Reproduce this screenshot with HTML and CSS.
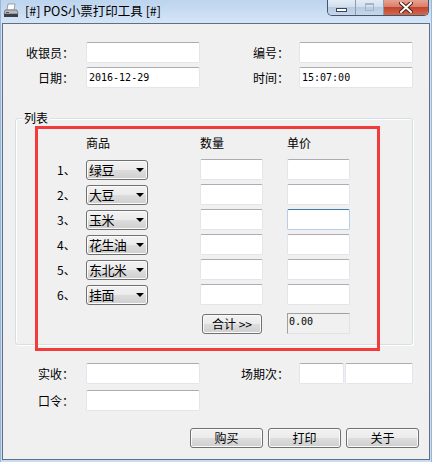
FILE: index.html
```html
<!DOCTYPE html>
<html>
<head>
  <meta charset="utf-8">
  <title>POS小票打印工具</title>
  <link rel="stylesheet" href="styles.css">
</head>
<body>
  <div class="window">
    <div class="titlebar">
      <svg class="app-icon" width="16" height="16" viewBox="0 0 16 16">
        <path d="M5 1 L12 1 L11 7 L4 7 Z" fill="#fff" stroke="#8a8a8a" stroke-width="0.8"/>
        <path d="M2 7 L14 7 L15 11 L1 11 Z" fill="#b8bcc2" stroke="#6d7278" stroke-width="0.8"/>
        <rect x="1" y="11" width="14" height="3" fill="#3c4046"/>
        <rect x="3" y="9" width="3" height="1" fill="#555"/>
      </svg>
      <span class="title">[#] POS小票打印工具 [#]</span>
      <div class="caption-buttons">
        <span class="cap-btn cap-min"><i></i></span>
        <span class="cap-btn cap-max"><i></i></span>
        <span class="cap-btn cap-close">
          <svg width="14" height="11" viewBox="0 0 14 11">
            <path d="M2 1 L12 10 M12 1 L2 10" stroke="#4b2018" stroke-width="4" stroke-linecap="square"/>
            <path d="M2 1 L12 10 M12 1 L2 10" stroke="#fff" stroke-width="2" stroke-linecap="square"/>
          </svg>
        </span>
      </div>
    </div>

    <div class="client">
      <div class="form-grid top-fields">
        <label>收银员：</label><input class="text">
        <label>编号：</label><input class="text">
        <label>日期：</label><input class="text" value="2016-12-29">
        <label>时间：</label><input class="text" value="15:07:00">
      </div>

      <div class="group">
        <div class="group-title">列表</div>
        <div class="item-grid">
          <span></span>
          <span class="col-head">商品</span>
          <span class="col-head">数量</span>
          <span class="col-head">单价</span>

          <span class="row-no">1、</span>
          <div class="combo"><span>绿豆</span><i class="arrow"></i></div>
          <input class="text">
          <input class="text">

          <span class="row-no">2、</span>
          <div class="combo"><span>大豆</span><i class="arrow"></i></div>
          <input class="text">
          <input class="text">

          <span class="row-no">3、</span>
          <div class="combo"><span>玉米</span><i class="arrow"></i></div>
          <input class="text">
          <input class="text focused">

          <span class="row-no">4、</span>
          <div class="combo"><span>花生油</span><i class="arrow"></i></div>
          <input class="text">
          <input class="text">

          <span class="row-no">5、</span>
          <div class="combo"><span>东北米</span><i class="arrow"></i></div>
          <input class="text">
          <input class="text">

          <span class="row-no">6、</span>
          <div class="combo"><span>挂面</span><i class="arrow"></i></div>
          <input class="text">
          <input class="text">

          <span></span>
          <span></span>
          <button class="btn total-btn">合计 &gt;&gt;</button>
          <div class="total-box">0.00</div>
        </div>
      </div>

      <div class="form-grid bottom-fields">
        <label>实收：</label><input class="text">
        <label>场期次：</label>
        <div class="split">
          <input class="text short">
          <input class="text long">
        </div>
        <label>口令：</label><input class="text">
      </div>

      <div class="actions">
        <button class="btn">购买</button>
        <button class="btn">打印</button>
        <button class="btn">关于</button>
      </div>

      <!-- red annotation frame drawn over the list -->
      <div class="highlight"></div>
    </div>
  </div>
</body>
</html>
```

FILE: styles.css
```css
html, body {
  margin: 0;
  padding: 0;
}

body {
  font-family: "Noto Sans CJK SC", "Noto Sans", sans-serif;
  font-size: 12px;
  color: #000;
  background-color: #c9dcf1;
}

.window {
  width: 432px;
  height: 462px;
  box-sizing: border-box;
  background: linear-gradient(to bottom, #bcd4ee 0, #d4e4f6 22px, #c8dcf2 100%);
  box-shadow: inset 1px 0 0 #9bb7d8, inset -1px 0 0 #9bb7d8;
}

.titlebar {
  height: 23px;
  display: flex;
  align-items: flex-start;
  padding-left: 3px;
}

.app-icon {
  margin-top: 3px;
  flex: none;
}

.title {
  margin-left: 6px;
  line-height: 22px;
  font-size: 12.5px;
  white-space: nowrap;
}

.caption-buttons {
  margin-left: auto;
  margin-right: 3px;
  display: flex;
  height: 16px;
  border: 1px solid #44546c;
  border-top: none;
  border-radius: 0 0 5px 5px;
  overflow: hidden;
  box-sizing: border-box;
}

.cap-btn {
  display: flex;
  align-items: center;
  justify-content: center;
  height: 100%;
}

.cap-min, .cap-max {
  width: 27px;
  background: linear-gradient(to bottom, #e3ecf6 0, #d2dfee 45%, #b9cbe1 50%, #c6d6ea 100%);
  border-right: 1px solid #8a9bb2;
}

.cap-min {
  border-bottom-left-radius: 4px;
}

.cap-min i {
  display: block;
  width: 9px;
  height: 2px;
  margin-top: 5px;
  background: #fff;
  border: 1px solid #38465c;
}

.cap-max i {
  display: block;
  width: 7px;
  height: 5px;
  margin-top: -2px;
  border: 1px solid #a6b4c6;
  border-top-width: 2px;
}

.cap-close {
  width: 44px;
  background: linear-gradient(to bottom, #e7a291 0, #d9806a 45%, #c4452f 50%, #cf6a4c 100%);
}

.client {
  position: relative;
  margin: 0 2px;
  height: 437px;
  box-sizing: border-box;
  border: 1px solid #5f6f84;
  background-color: #f0f0f0;
}

.form-grid {
  display: grid;
  grid-template-columns: 83px 114px 99px 114px;
  grid-auto-rows: 21px;
  align-items: center;
}

.form-grid label {
  text-align: right;
  padding-right: 12px;
}

.form-grid label:nth-of-type(2n) {
  padding-right: 10px;
}

.top-fields {
  padding-top: 18px;
  row-gap: 4px;
}

.bottom-fields {
  margin-top: 18px;
  row-gap: 6px;
}

.text {
  display: block;
  width: 100%;
  height: 21px;
  box-sizing: border-box;
  margin: 0;
  padding: 0 2px;
  border: 1px solid #e2e6ec;
  border-top-color: #abadb3;
  border-radius: 2px;
  background: #fff;
  font-family: "DejaVu Sans Mono", "Liberation Mono", monospace;
  font-size: 10px;
  color: #000;
  outline: none;
}

.text.focused {
  border-color: #b5cfe7;
  border-top-color: #3d7bad;
}

.split {
  display: flex;
  gap: 1px;
}

.split .short {
  width: 45px;
}

.split .long {
  width: 68px;
}

.group {
  margin: 30px 16px 0 12px;
  border: 1px solid #d5dfe5;
  border-radius: 3px;
  box-shadow: inset 1px 1px 0 #fff, 1px 1px 0 #fff;
}

.group-title {
  width: max-content;
  height: 14px;
  line-height: 14px;
  margin: -8px 0 0 6px;
  padding: 0 2px;
  background-color: #f0f0f0;
}

.item-grid {
  display: grid;
  grid-template-columns: 70px 114px 87px 63px;
  grid-template-rows: 21px repeat(6, 21px) 25px;
  row-gap: 4px;
  padding: 9px 0 10px 0;
  align-items: center;
}

.item-grid .text {
  width: 63px;
}

.col-head {
  align-self: start;
  line-height: 18px;
}

.row-no {
  padding-left: 41px;
  line-height: 14px;
}

.combo {
  width: 62px;
  height: 20px;
  box-sizing: border-box;
  display: flex;
  align-items: center;
  justify-content: space-between;
  padding: 0 3px 0 2px;
  border: 1px solid #707070;
  border-radius: 3px;
  background: linear-gradient(to bottom, #f2f2f2 0, #ebebeb 50%, #dddddd 50%, #cfcfcf 100%);
  box-shadow: inset 0 0 0 1px #fbfbfb;
  font-size: 13px;
  letter-spacing: -0.6px;
  line-height: 18px;
}

.arrow {
  width: 0;
  height: 0;
  margin-top: 1px;
  border-left: 4px solid transparent;
  border-right: 4px solid transparent;
  border-top: 4px solid #000;
}

.btn {
  height: 20px;
  box-sizing: border-box;
  margin: 0;
  padding: 0;
  border: 1px solid #707070;
  border-radius: 3px;
  background: linear-gradient(to bottom, #f2f2f2 0, #ebebeb 50%, #dddddd 50%, #cfcfcf 100%);
  box-shadow: inset 0 0 0 1px #fbfbfb;
  font-family: "Noto Sans CJK SC", sans-serif;
  font-size: 12px;
  line-height: 18px;
  color: #000;
}

.total-btn {
  width: 60px;
  margin-left: 2px;
  align-self: end;
}

.total-box {
  width: 63px;
  height: 21px;
  box-sizing: border-box;
  align-self: end;
  border: 1px solid #e3e3e3;
  border-top-color: #a0a0a0;
  border-left-color: #a0a0a0;
  padding: 2px 0 0 1px;
  font-family: "DejaVu Sans Mono", "Liberation Mono", monospace;
  font-size: 10px;
  line-height: 12px;
}

.actions {
  display: flex;
  justify-content: flex-end;
  gap: 5px;
  margin-top: 17px;
  padding-right: 10px;
}

.actions .btn {
  width: 73px;
}

.highlight {
  position: absolute;
  left: 32px;
  top: 102px;
  width: 345px;
  height: 225px;
  box-sizing: border-box;
  border: 3px solid #f23b3b;
  pointer-events: none;
}
```
